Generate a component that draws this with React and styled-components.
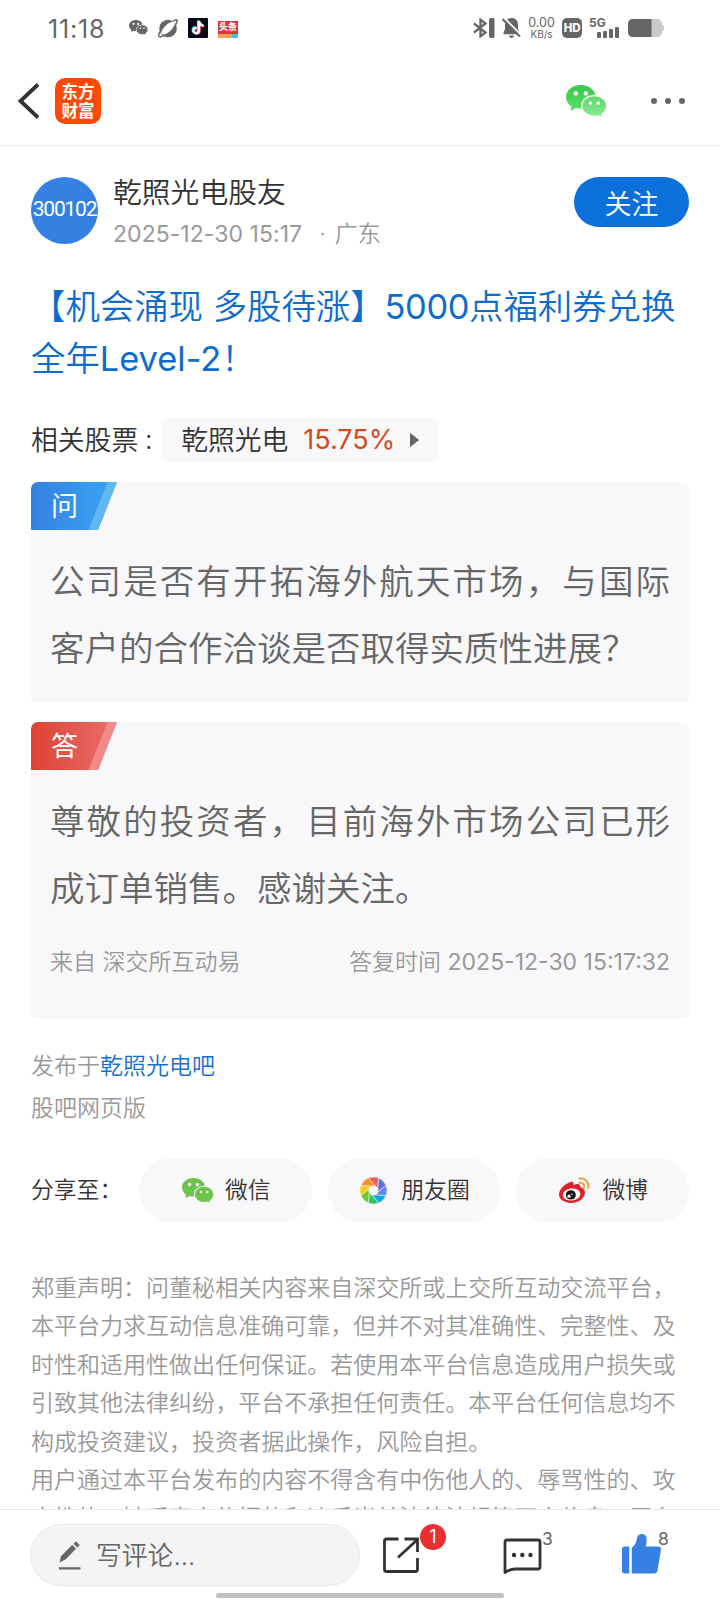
import React from "react";
import styled, { createGlobalStyle } from "styled-components";

const GlobalStyle = createGlobalStyle`
  * { box-sizing: border-box; }
  body {
    margin: 0;
    background: #fff;
    font-family: Inter, "Noto Sans CJK SC", sans-serif;
    font-weight: 350;
    color: #333;
  }
`;

const Screen = styled.div`
  width: 720px;
  height: 1600px;
  display: flex;
  flex-direction: column;
  overflow: hidden;
  background: #fff;
`;

const Latin = styled.span`
  font-weight: 400;
  letter-spacing: ${(p) => p.$spacing || 0}px;
`;

/* ---------- status bar ---------- */
const StatusBar = styled.div`
  height: 57px;
  flex: none;
  display: flex;
  align-items: center;
  justify-content: space-between;
  padding: 0 56px 1px 48px;
  color: #666;
`;
const StatusGroup = styled.div`
  display: flex;
  align-items: center;
  gap: ${(p) => p.$gap}px;
`;
const Clock = styled.span`
  width: 71px;
  font-size: 25px;
  font-weight: 400;
  letter-spacing: 0.8px;
  line-height: 28px;
  padding-top: 2px;
  white-space: nowrap;
`;
const NetSpeed = styled.div`
  width: 27px;
  display: flex;
  flex-direction: column;
  align-items: center;
  font-size: 12.5px;
  font-weight: 400;
  line-height: 10.5px;
  white-space: nowrap;
  padding-top: 1px;
  small { font-size: 10px; }
`;
const HdBadge = styled.span`
  width: 20px;
  height: 20px;
  border-radius: 5px;
  background: #666;
  color: #fff;
  font: 800 11.5px/20px Inter, sans-serif;
  letter-spacing: -0.3px;
  text-align: center;
`;
const HeadlineIcon = styled.span`
  width: 20px;
  height: 17px;
  display: flex;
  flex-direction: column;
  justify-content: space-between;
  background: #e5323a;
  color: #fff;
  font: 900 9px/12px "Noto Sans CJK SC", sans-serif;
  text-align: center;
  white-space: nowrap;
  margin-top: 3px;
  &::after {
    content: "";
    height: 4px;
    background: linear-gradient(90deg, #f0a25c 72%, #3fc4d8 72%);
  }
`;
const Signal = styled.div`
  width: 32px;
  height: 20px;
  display: flex;
  flex-direction: column;
  justify-content: space-between;
  font: 700 12px/10px Inter, sans-serif;
`;
const SignalBars = styled.div`
  display: flex;
  align-items: flex-end;
  gap: 2px;
  height: 11px;
  margin-top: -1px;
  padding-left: 8px;
`;
const SignalBar = styled.i`
  width: 4px;
  height: ${(p) => p.$h}px;
  border-radius: 1px;
  background: #666;
`;

/* ---------- header ---------- */
const Header = styled.header`
  height: 89px;
  flex: none;
  display: flex;
  align-items: center;
  padding: 0 35px 0 17px;
  border-bottom: 1px solid #ebebeb;
`;
const BrandMark = styled.div`
  width: 46px;
  height: 46px;
  margin: 0 auto 0 16px;
  border-radius: 10px;
  background: #fd4a06;
  color: #fff;
  display: flex;
  flex-direction: column;
  justify-content: center;
  align-items: center;
  padding-bottom: 1px;
  font: 700 16.5px/19px "Noto Sans CJK SC", sans-serif;
  white-space: nowrap;
`;
const Dots = styled.div`
  display: flex;
  gap: 8px;
  margin-left: 44px;
  i { width: 6px; height: 6px; border-radius: 50%; background: #666; }
`;

/* ---------- article ---------- */
const Content = styled.main`
  flex: 1;
  min-height: 0;
  overflow: hidden;
  padding: 31px 31px 0;
`;
const Author = styled.div`
  display: flex;
  height: 68px;
`;
const Avatar = styled.div`
  width: 67px;
  height: 67px;
  border-radius: 50%;
  background: #3581e2;
  color: #fff;
  font: 400 21px/65px Roboto, sans-serif;
  display: flex;
  justify-content: center;
  letter-spacing: -1.2px;
`;
const AuthorInfo = styled.div`
  flex: 1;
  margin-left: 15px;
  white-space: nowrap;
`;
const AuthorName = styled.div`
  font-size: 28.8px;
  line-height: 32px;
`;
const PostMeta = styled.div`
  margin-top: 9px;
  font-size: 23px;
  line-height: 32px;
  color: #999;
  display: flex;
`;
const Separator = styled.span`
  margin: 0 9px 0 17px;
`;
const FollowButton = styled.button`
  width: 115px;
  height: 50px;
  padding: 0;
  border: 0;
  border-radius: 25px;
  background: #0c70db;
  color: #fff;
  font: 350 27px/51px "Noto Sans CJK SC", sans-serif;
`;
const Title = styled.h1`
  margin: 36px 0 0;
  font-size: 34.4px;
  font-weight: 350;
  line-height: 52px;
  color: #0f6cc8;
  white-space: nowrap;
`;
const Line = styled.span`
  display: block;
  white-space: nowrap;
  ${(p) => p.$fill && "text-align: justify; text-align-last: justify; white-space: normal;"}
`;
const Related = styled.div`
  display: flex;
  align-items: center;
  height: 46px;
  margin-top: 32px;
  font-size: 26.8px;
  line-height: 44px;
  white-space: nowrap;
`;
const CenteredColon = styled.span`
  width: 24px;
  font-size: 21px;
  font-family: "Noto Sans CJK TC", sans-serif;
`;
const StockChip = styled.div`
  display: flex;
  align-items: center;
  width: 276px;
  height: 46px;
  padding: 0 19px;
  border-radius: 8px;
  background: #f8f8fa;
  justify-content: space-between;
`;
const Change = styled.span`
  color: #d24a20;
  font-size: 27px;
  font-weight: 400;
`;
const QaCard = styled.section`
  height: ${(p) => p.$height}px;
  margin-top: 19px;
  border-radius: 7px;
  background: #f8f8fa;
  overflow: hidden;
`;
const Tag = styled.div`
  width: 86px;
  height: 48px;
  padding-left: 20px;
  color: #fff;
  font: 400 27px/46px "Noto Sans CJK SC", sans-serif;
  clip-path: polygon(0 0, 100% 0, 67px 100%, 0 100%);
  background: ${(p) =>
    p.$answer
      ? "linear-gradient(111.8deg, transparent 72.6%, #f38a8a 73.2%), linear-gradient(90deg, #dc4234, #e9716c)"
      : "linear-gradient(111.8deg, transparent 72.6%, #5fb9f0 73.2%), linear-gradient(90deg, #3580e2, #389ff0 80%)"};
`;
const QaText = styled.p`
  margin: 18px 19px 0 19px;
  font-size: 34.5px;
  line-height: 67px;
  color: #666;
`;
const QaMeta = styled.div`
  display: flex;
  justify-content: space-between;
  margin: 24px 19px 0 19px;
  font-size: 23px;
  line-height: 32px;
  color: #999;
  white-space: nowrap;
`;
const Published = styled.div`
  margin-top: 26px;
  font-size: 23px;
  line-height: 42px;
  color: #999;
  a { color: #1470cc; }
`;
const ShareRow = styled.div`
  display: flex;
  align-items: center;
  gap: 16px;
  height: 65px;
  margin-top: 29px;
  font-size: 22.8px;
  white-space: nowrap;
`;
const ShareLabel = styled.span`
  width: 92px;
  padding-bottom: 5px;
`;
const SharePill = styled.div`
  flex: 1;
  height: 65px;
  padding-left: 2px;
  border-radius: 33px;
  background: #f8f8fa;
  display: flex;
  align-items: center;
  justify-content: center;
  gap: ${(p) => p.$gap}px;
  span { padding-bottom: 5px; }
`;
const Disclaimer = styled.p`
  margin: 46px 0 0;
  font-size: 23.02px;
  line-height: 38.4px;
  color: #999;
`;

/* ---------- bottom bar ---------- */
const BottomBar = styled.footer`
  height: 91px;
  flex: none;
  border-top: 1px solid #e6e6e6;
  background: #fff;
  padding: 14px 0 0 30px;
`;
const Actions = styled.div`
  display: flex;
  height: 62px;
`;
const CommentInput = styled.div`
  width: 330px;
  height: 62px;
  border: 1px solid #e9e9e9;
  border-radius: 31px;
  background: #f4f4f4;
  display: flex;
  align-items: center;
  gap: 15px;
  padding-left: 28px;
  color: #666;
  font-size: 25.8px;
  span { padding-bottom: 4px; }
`;
const Action = styled.div`
  position: relative;
  width: 42px;
  height: 42px;
  margin: 9px 0 0 ${(p) => p.$left}px;
`;
const Badge = styled.span`
  position: absolute;
  left: 40px;
  top: -9px;
  width: 26px;
  height: 26px;
  border-radius: 13px;
  background: #e83030;
  color: #fff;
  font-size: 18px;
  font-weight: 400;
  line-height: 26px;
  text-align: center;
`;
const Count = styled.span`
  position: absolute;
  left: ${(p) => p.$x}px;
  top: -4px;
  color: #666;
  font-size: 17.5px;
  font-weight: 400;
  line-height: 20px;
`;
const HomeIndicator = styled.div`
  width: 288px;
  height: 5px;
  margin: 7px 0 0 186px;
  border-radius: 3px;
  background: #c1c1c1;
`;

/* ---------- icons ---------- */
function WechatIcon({ width, big, small = big, back = "#fff" }) {
  return (
    <svg width={width} height={(width * 33) / 41} viewBox="0 0 41 33">
      <path fill={big} d="M14.8 0C6.600 0 0 5.300 0 12c0 3.900 2.100 7.200 5.300 9.400L4.600 26l5.200-2.900c1.600.5 3.200.7 5 .7 8.200 0 14.800-5.100 14.800-11.800S23 0 14.800 0Z" />
      <path fill={small} stroke={back} strokeWidth="1.4" d="M28.300 10.500c-7 0-12.600 4.700-12.600 10.500s5.600 10.400 12.600 10.400c1.500 0 2.900-.2 4.200-.6l4.200 2.200-.7-4c2.900-1.900 4.900-4.700 4.900-8 0-5.800-5.600-10.500-12.600-10.500Z" />
      <g fill={back}>
        <circle cx="9.800" cy="8.400" r="2.200" />
        <circle cx="19.800" cy="8.400" r="2.200" />
        <circle cx="24.400" cy="18" r="1.700" />
        <circle cx="32.300" cy="18" r="1.700" />
      </g>
    </svg>
  );
}

function HeaderWechat() {
  return (
    <>
      <svg width="0" height="0">
        <defs>
          <linearGradient id="wxBig" x1="0" y1="0" x2="0" y2="1">
            <stop offset="0" stopColor="#35c74b" />
            <stop offset="1" stopColor="#5ee067" />
          </linearGradient>
          <linearGradient id="wxSmall" x1="0" y1="0" x2="0" y2="1">
            <stop offset="0" stopColor="#62d56d" />
            <stop offset="1" stopColor="#8ee993" />
          </linearGradient>
        </defs>
      </svg>
      <WechatIcon width={41} big="url(#wxBig)" small="url(#wxSmall)" />
    </>
  );
}

function OrbitIcon() {
  return (
    <svg width="20" height="19" viewBox="0 0 20 19">
      <circle cx="10" cy="9.500" r="8.800" fill="#666" />
      <ellipse cx="10" cy="9.200" rx="8.600" ry="3.500" fill="#fff" transform="rotate(-43 10 9.200)" />
      <path fill="none" stroke="#666" strokeWidth="1.500" d="M2.200 12.500C.6 15 .2 17 1.300 17.700c1 .5 3-.3 4.500-1.300M15 2C17 .8 18.600.5 19.100 1.400c.4.900-.3 2.600-1.500 4.400" />
    </svg>
  );
}

function NoteIcon() {
  const note = "M9.600 3.800h2.600c.2 2 1.400 3.200 3.400 3.400v2.500c-1.300 0-2.400-.4-3.400-1.100v4.600c0 2.500-1.800 4.100-4 4.100S4.200 15.600 4.200 13.400c0-2.400 2-4.100 4.400-3.800v2.500c-1.100-.2-2 .4-2 1.400 0 .8.700 1.400 1.500 1.400.9 0 1.500-.6 1.500-1.600Z";
  return (
    <svg width="20" height="20" viewBox="0 0 20 20">
      <rect width="20" height="20" rx="1" fill="#080a18" />
      <path d={note} fill="#30d8dc" transform="translate(-.7 -1.500)" />
      <path d={note} fill="#e8314f" transform="translate(.7 -.3)" />
      <path d={note} fill="#fff" transform="translate(0 -.8)" />
    </svg>
  );
}

function BluetoothIcon() {
  return (
    <svg width="22" height="20" viewBox="0 0 22 20" fill="none" stroke="#666" strokeWidth="2.300">
      <path d="m1 5.500 11.500 9L7.500 18.300V1.700l5 3.800L1 14.500" />
      <rect x="16" y="0" width="5.500" height="20" rx="2" fill="#666" stroke="none" />
    </svg>
  );
}

function MuteIcon() {
  return (
    <svg width="19" height="20" viewBox="0 0 19 20">
      <path fill="#666" d="M9.500 0c4 0 6.500 2.600 6.500 6.500v4.500l1.500 3.500v1.700h-16v-1.700L3 11V6.500C3 2.600 5.500 0 9.500 0ZM7 17.500h5c-.3 1.600-1.200 2.500-2.500 2.500S7.300 19.100 7 17.500Z" />
      <path stroke="#fff" strokeWidth="2" d="m2 0 17 17" />
      <path stroke="#666" strokeWidth="2" d="m.5 1 17.500 17.500" />
    </svg>
  );
}

function BatteryIcon() {
  return (
    <svg width="36" height="18" viewBox="0 0 36 18">
      <path fill="#c9c9c9" d="M22 0h7c3 0 5 2 5 5v1c1.300 0 2 .8 2 3s-.7 3-2 3v1c0 3-2 5-5 5h-7Z" />
      <path fill="#666" d="M4.500 0H23.500v18h-19C1.800 18 0 16.200 0 13.500v-9C0 1.800 1.800 0 4.500 0Z" />
    </svg>
  );
}

/* aperture blades, clockwise from the top */
const BLADES = ["#f0605a", "#6c6ee0", "#5a88ee", "#12a9ec", "#39c46b", "#6bcb2b", "#fbc91c", "#fb8c2a"];
function MomentsIcon() {
  return (
    <svg width="27" height="27" viewBox="-13.500 -13.500 27 27">
      {BLADES.map((color, i) => (
        <path key={color} fill={color} stroke="#f8f8fa" strokeWidth=".5" transform={`rotate(${i * 45})`} d="M-5.170 -12.470A13.500 13.500 0 0 1 5.170 -12.470L4.400 -2.400L1.400 -4.800Z" />
      ))}
    </svg>
  );
}

function WeiboIcon() {
  return (
    <svg width="31" height="27" viewBox="0 0 31 27">
      <path fill="#e0202f" d="M11.800 5c2.100-.7 3.200.5 2.500 3 3.900-1.700 7.600-1.500 7 2.100 2.800.8 4.600 2.500 4.600 5.200 0 6-6.200 10.700-13.600 10.700C5.300 26 0 22.600 0 17.600 0 12.400 6.500 6.100 11.800 5Z" />
      <ellipse cx="12.600" cy="17.500" rx="8.800" ry="6" fill="#fff" transform="rotate(-7 12.600 17.500)" />
      <ellipse cx="11.800" cy="17.900" rx="5" ry="4.700" fill="#151515" />
      <circle cx="10" cy="19.200" r="1.600" fill="#fff" />
      <circle cx="12.900" cy="17.300" r=".8" fill="#fff" />
      <path fill="none" stroke="#f0a24c" strokeWidth="2.200" strokeLinecap="round" d="M20.500 1.500c5.600-.8 9.700 3.500 8.700 9.400M20.600 5.800c3-.4 5 1.600 4.500 4.700" />
    </svg>
  );
}

function PencilIcon() {
  return (
    <svg width="22" height="29" viewBox="0 0 22 29" fill="#666">
      <path d="M13.300 3.800 17 7.800 6.500 18.600.5 21.500 2 15.200Z" />
      <path d="M14.500 2.700 17 .3 20.800 4.300 18.200 6.600Z" />
      <rect x="0" y="26.300" width="21.500" height="2.200" rx=".5" />
    </svg>
  );
}

const SHARE_TARGETS = [
  { label: "微信", gap: 11, icon: <WechatIcon width={32} big="#6cc44c" back="#f8f8fa" /> },
  { label: "朋友圈", gap: 14, icon: <MomentsIcon /> },
  { label: "微博", gap: 12, icon: <WeiboIcon /> },
];

const NOTICE = [
  "郑重声明：问董秘相关内容来自深交所或上交所互动交流平台，",
  "本平台力求互动信息准确可靠，但并不对其准确性、完整性、及",
  "时性和适用性做出任何保证。若使用本平台信息造成用户损失或",
  "引致其他法律纠纷，平台不承担任何责任。本平台任何信息均不",
  "构成投资建议，投资者据此操作，风险自担。",
  "用户通过本平台发布的内容不得含有中伤他人的、辱骂性的、攻",
  "击性的、缺乏事实依据的和违反当前法律法规等不实信息，平台",
];

export default function App() {
  return (
    <Screen>
      <GlobalStyle />
      <StatusBar>
        <StatusGroup $gap={10}>
          <Clock>11:18</Clock>
          <WechatIcon width={19} big="#666" />
          <OrbitIcon />
          <NoteIcon />
          <HeadlineIcon>头条</HeadlineIcon>
        </StatusGroup>
        <StatusGroup $gap={7}>
          <BluetoothIcon />
          <MuteIcon />
          <NetSpeed>
            <span>0.00</span>
            <small>KB/s</small>
          </NetSpeed>
          <HdBadge>HD</HdBadge>
          <Signal>
            5G
            <SignalBars>
              {[6, 7, 9, 11].map((h) => <SignalBar key={h} $h={h} />)}
            </SignalBars>
          </Signal>
          <BatteryIcon />
        </StatusGroup>
      </StatusBar>

      <Header>
        <svg width="22" height="36" viewBox="0 0 22 36" fill="none" stroke="#333" strokeWidth="3.800">
          <path d="M21 1.500 3.500 18 21 34.500" />
        </svg>
        <BrandMark>
          <span>东方</span>
          <span>财富</span>
        </BrandMark>
        <HeaderWechat />
        <Dots><i /><i /><i /></Dots>
      </Header>

      <Content>
        <Author>
          <Avatar>300102</Avatar>
          <AuthorInfo>
            <AuthorName>乾照光电股友</AuthorName>
            <PostMeta>
              <Latin $spacing={0.05}>2025-12-30 15:17</Latin>
              <Separator>·</Separator>
              <span>广东</span>
            </PostMeta>
          </AuthorInfo>
          <FollowButton>关注</FollowButton>
        </Author>

        <Title>
          <Line>【机会涌现 多股待涨】<Latin $spacing={-0.4}>5000</Latin>点福利券兑换</Line>
          <Line>全年<Latin>Level-2</Latin>！</Line>
        </Title>

        <Related>
          <span>相关股票</span>
          <CenteredColon lang="zh-TW">：</CenteredColon>
          <StockChip>
            <span>乾照光电</span>
            <Change>15.75%</Change>
            <svg width="9" height="14" viewBox="0 0 9 14"><path fill="#666" d="M0 .8Q0 0 .8.5L8.500 6.400Q9 7 8.500 7.600L.8 13.500Q0 14 0 13.200Z" /></svg>
          </StockChip>
        </Related>

        <QaCard $height={221}>
          <Tag>问</Tag>
          <QaText>
            <Line $fill>公司是否有开拓海外航天市场，与国际</Line>
            <Line>客户的合作洽谈是否取得实质性进展？</Line>
          </QaText>
        </QaCard>

        <QaCard $height={297}>
          <Tag $answer>答</Tag>
          <QaText>
            <Line $fill>尊敬的投资者，目前海外市场公司已形</Line>
            <Line>成订单销售。感谢关注。</Line>
          </QaText>
          <QaMeta>
            <span>来自 深交所互动易</span>
            <span>答复时间 <Latin>2025-12-30 15:17:32</Latin></span>
          </QaMeta>
        </QaCard>

        <Published>
          <div>发布于<a>乾照光电吧</a></div>
          <div>股吧网页版</div>
        </Published>

        <ShareRow>
          <ShareLabel>分享至：</ShareLabel>
          {SHARE_TARGETS.map((s) => (
            <SharePill key={s.label} $gap={s.gap}>{s.icon}<span>{s.label}</span></SharePill>
          ))}
        </ShareRow>

        <Disclaimer>
          {NOTICE.map((text) => <Line key={text}>{text}</Line>)}
        </Disclaimer>
      </Content>

      <BottomBar>
        <Actions>
          <CommentInput><PencilIcon /><span>写评论...</span></CommentInput>
          <Action $left={20}>
            <svg width="42" height="42" viewBox="0 0 42 42" fill="none" stroke="#333" strokeWidth="2.800">
              <path d="M18.500 6H6.500Q4.500 6 4.500 8V36.500Q4.500 38.500 6.500 38.500H35.500Q37.500 38.500 37.500 36.500V25M18 24.500 37 7M24.500 6H37.500V19" />
            </svg>
            <Badge>1</Badge>
          </Action>
          <Action $left={79}>
            <svg width="42" height="42" viewBox="0 0 42 42" fill="none" stroke="#333" strokeWidth="2.800" strokeLinejoin="round">
              <path d="M4 39.500V9Q4 7 6 7H37Q39 7 39 9V34Q39 36 37 36H14Q9 36 4 39.500Z" />
              <g fill="#333" stroke="none"><circle cx="13" cy="22" r="2.200" /><circle cx="21.300" cy="22" r="2.200" /><circle cx="29.500" cy="22" r="2.200" /></g>
            </svg>
            <Count $x={41}>3</Count>
          </Action>
          <Action $left={78}>
            <svg width="42" height="42" viewBox="0 0 42 42" fill="#3580e2">
              <path d="M4 13.500H8.200V40.500H4Q1 40.500 1 37.500V16.500Q1 13.500 4 13.500ZM10.800 40.500V14.500Q15 12 16 5Q16.800 1 21 1Q25.700 1.200 25.700 6.500Q25.700 10 24.700 13.500H37Q40.500 13.800 39.900 17L36.500 37.500Q36 40.500 33 40.500Z" />
            </svg>
            <Count $x={37}>8</Count>
          </Action>
        </Actions>
        <HomeIndicator />
      </BottomBar>
    </Screen>
  );
}
